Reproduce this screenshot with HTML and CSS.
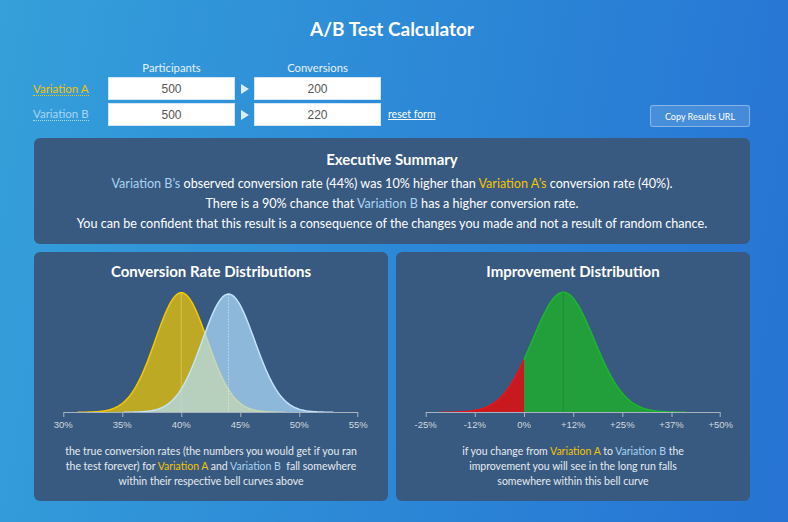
FILE: index.html
```html
<!DOCTYPE html>
<html lang="en">
<head>
<meta charset="utf-8">
<title>A/B Test Calculator</title>
<link rel="stylesheet" href="styles.css">
</head>
<body>
<div class="page">
  <h1 class="title">A/B Test Calculator</h1>

  <div class="form">
    <div class="head head-p">Participants</div>
    <div class="head head-c">Conversions</div>

    <span class="var var-a row-a">Variation A</span>
    <input class="field col-p row-a" value="500">
    <svg class="arrow row-a" viewBox="0 0 8 10"><polygon points="0,0 8,5 0,10"/></svg>
    <input class="field col-c row-a" value="200">

    <span class="var var-b row-b">Variation B</span>
    <input class="field col-p row-b" value="500">
    <svg class="arrow row-b" viewBox="0 0 8 10"><polygon points="0,0 8,5 0,10"/></svg>
    <input class="field col-c row-b" value="220">
    <a class="reset row-b" href="#">reset form</a>
    <button class="copy row-b" type="button">Copy Results URL</button>
  </div>

  <section class="panel summary">
    <h2 class="panel-title">Executive Summary</h2>
    <p class="summary-text">
      <span class="b">Variation B’s</span> observed conversion rate (44%) was 10% higher than <span class="a">Variation A’s</span> conversion rate (40%).<br>
      There is a 90% chance that <span class="b">Variation B</span> has a higher conversion rate.<br>
      You can be confident that this result is a consequence of the changes you made and not a result of random chance.
    </p>
  </section>

  <div class="charts">
    <section class="panel chart">
      <h2 class="panel-title">Conversion Rate Distributions</h2>
      <svg class="plot" width="354" height="151" viewBox="0 0 354 151">
        <path id="fillA" class="fill-a"/>
        <path id="lineA" class="line-a"/>
        <line id="meanA" class="mean-a"/>
        <path id="fillB" class="fill-b"/>
        <path id="lineB" class="line-b"/>
        <line id="meanB" class="mean-b"/>
        <g class="axis">
          <line x1="29.3" y1="131.5" x2="324.3" y2="131.5"/>
          <line x1="29.8" y1="131.5" x2="29.8" y2="136"/>
          <line x1="88.8" y1="131.5" x2="88.8" y2="136"/>
          <line x1="147.8" y1="131.5" x2="147.8" y2="136"/>
          <line x1="206.8" y1="131.5" x2="206.8" y2="136"/>
          <line x1="265.8" y1="131.5" x2="265.8" y2="136"/>
          <line x1="323.8" y1="131.5" x2="323.8" y2="136"/>
        </g>
        <g class="ticks">
          <text x="29.3" y="146.5">30%</text>
          <text x="88.3" y="146.5">35%</text>
          <text x="147.3" y="146.5">40%</text>
          <text x="206.3" y="146.5">45%</text>
          <text x="265.3" y="146.5">50%</text>
          <text x="324.3" y="146.5">55%</text>
        </g>
      </svg>
      <p class="caption">the true conversion rates (the numbers you would get if you ran<br>the test forever) for <span class="a">Variation A</span> and <span class="b">Variation B</span>&nbsp; fall somewhere<br>within their respective bell curves above</p>
    </section>

    <section class="panel chart">
      <h2 class="panel-title">Improvement Distribution</h2>
      <svg class="plot" width="354" height="151" viewBox="0 0 354 151">
        <path id="fillNeg" class="fill-neg"/>
        <path id="fillPos" class="fill-pos"/>
        <path id="lineNeg" class="line-neg"/>
        <path id="linePos" class="line-pos"/>
        <line id="meanI" class="mean-i"/>
        <g class="axis">
          <line x1="29.7" y1="131.5" x2="324.7" y2="131.5"/>
          <line x1="30.2" y1="131.5" x2="30.2" y2="136"/>
          <line x1="79.3" y1="131.5" x2="79.3" y2="136"/>
          <line x1="128.5" y1="131.5" x2="128.5" y2="136"/>
          <line x1="177.7" y1="131.5" x2="177.7" y2="136"/>
          <line x1="226.8" y1="131.5" x2="226.8" y2="136"/>
          <line x1="276" y1="131.5" x2="276" y2="136"/>
          <line x1="324.2" y1="131.5" x2="324.2" y2="136"/>
        </g>
        <g class="ticks">
          <text x="29.7" y="146.5">-25%</text>
          <text x="78.8" y="146.5">-12%</text>
          <text x="128" y="146.5">0%</text>
          <text x="177.2" y="146.5">+12%</text>
          <text x="226.3" y="146.5">+25%</text>
          <text x="275.5" y="146.5">+37%</text>
          <text x="324.7" y="146.5">+50%</text>
        </g>
      </svg>
      <p class="caption">if you change from <span class="a">Variation A</span> to <span class="b">Variation B</span> the<br>improvement you will see in the long run falls<br>somewhere within this bell curve</p>
    </section>
  </div>
</div>
<script src="script.js"></script>
</body>
</html>
```

FILE: styles.css
```css
* { box-sizing: border-box; }
html, body { margin: 0; height: 100%; }
body {
  background: linear-gradient(100deg, #35a0da 0%, #2d8bd7 45%, #2673d3 100%);
  font-family: Lato, "Open Sans", "Liberation Sans", sans-serif;
  color: #fff;
  min-height: 522px;
  overflow: hidden;
}
.page {
  width: 716px;
  margin-left: 34px;
  padding-top: 18px;
}
.title {
  margin: 0;
  font-size: 19px;
  line-height: 22px;
  font-weight: 700;
  text-align: center;
}
.form {
  margin: 19px 0 0 -1px;
  display: grid;
  grid-template-columns: 75px 127px 19px 127px 1fr auto;
  grid-template-rows: 16px 23px 23px;
  row-gap: 2px;
}
.form .row-a { grid-row: 2; }
.form .row-b { grid-row: 3; margin-top: 1px; }
.head {
  grid-row: 1;
  font-size: 11.25px;
  line-height: 16px;
  padding-top: 1px;
  text-align: center;
  color: #e6f1fb;
}
.head-p { grid-column: 2; }
.head-c { grid-column: 4; }
.var {
  grid-column: 1;
  align-self: center;
  justify-self: start;
  font-size: 11.5px;
  line-height: 13px;
  border-bottom: 1px dotted currentColor;
}
.var-a { color: #f4c400; }
.var-b { color: #a9d4f4; }
.field {
  width: 127px;
  height: 23px;
  border: 1px solid #d4e6f4;
  background: #fff;
  font-family: "Liberation Sans", Arial, sans-serif;
  font-size: 12px;
  color: #555;
  text-align: center;
  padding: 0;
  margin: 0;
  outline: none;
}
.col-p { grid-column: 2; }
.col-c { grid-column: 4; }
.arrow {
  grid-column: 3;
  width: 8px;
  height: 10px;
  align-self: center;
  margin-left: 6px;
  fill: #d9edfb;
}
.form .row-b.arrow { margin-top: 2px; }
.reset {
  grid-column: 5;
  align-self: center;
  justify-self: start;
  margin-left: 7px;
  font-size: 10.5px;
  color: #fff;
  text-decoration: underline;
}
.form .copy {
  grid-column: 6;
  align-self: start;
  width: 100px;
  height: 22px;
  margin: 3px 0 -3px 0;
  padding: 0;
  border: 1px solid rgba(255, 255, 255, 0.35);
  border-radius: 3px;
  background: rgba(255, 255, 255, 0.14);
  color: #fff;
  font-family: Lato, "Liberation Sans", sans-serif;
  font-size: 9px;
}
.panel {
  background: #385a80;
  border-radius: 6px;
}
.summary {
  margin-top: 13px;
  padding: 11px 10px 10px;
  text-align: center;
}
.panel-title {
  margin: 0;
  font-size: 15px;
  line-height: 20px;
  font-weight: 700;
}
.summary-text {
  margin: 5px 0 0;
  font-size: 12.6px;
  line-height: 20px;
}
.a { color: #f4c400; }
.b { color: #a9d4f4; }
.charts {
  margin-top: 8px;
  display: grid;
  grid-template-columns: 354px 354px;
  column-gap: 8px;
}
.chart {
  height: 249px;
  padding-top: 9px;
  text-align: center;
}
.plot { display: block; }
.caption {
  margin: 12px 0 0;
  font-size: 10.5px;
  line-height: 15px;
  color: #e6eaf0;
}
.fill-a { fill: rgba(243, 199, 0, 0.72); stroke: none; }
.line-a { fill: none; stroke: #f5c800; stroke-width: 1.5; }
.mean-a { stroke: rgba(255, 240, 160, 0.35); stroke-width: 1; }
.fill-b { fill: rgba(180, 224, 255, 0.7); stroke: none; }
.line-b { fill: none; stroke: #c2e4fd; stroke-width: 1.5; }
.mean-b { stroke: rgba(255, 255, 255, 0.35); stroke-width: 1; stroke-dasharray: 2 1; }
.fill-neg { fill: #c8191f; }
.fill-pos { fill: #229e3a; }
.line-neg { fill: none; stroke: #ee1118; stroke-width: 1.5; }
.line-pos { fill: none; stroke: #1cb82e; stroke-width: 1.5; }
.mean-i { stroke: #1d8f35; stroke-width: 1; }
.axis line { stroke: #a8b3bf; stroke-width: 1; }
.ticks text {
  font-family: "Liberation Sans", Arial, sans-serif;
  font-size: 9.5px;
  fill: #d2d8df;
  text-anchor: middle;
}
```

FILE: script.js
```js
(function () {
  var BASE = 131.3;
  function pts(mean, sd, peak, from, to) {
    var out = [], n = 160;
    for (var i = 0; i <= n; i++) {
      var x = from + (to - from) * i / n;
      var z = (x - mean) / sd;
      out.push([x, BASE - peak * Math.exp(-0.5 * z * z)]);
    }
    return out;
  }
  function line(p) {
    return p.map(function (q, i) {
      return (i ? 'L' : 'M') + q[0].toFixed(2) + ',' + q[1].toFixed(2);
    }).join('');
  }
  function area(p) {
    var first = p[0], last = p[p.length - 1];
    return 'M' + first[0].toFixed(2) + ',' + BASE + line(p).replace(/^M/, 'L') +
      'L' + last[0].toFixed(2) + ',' + BASE + 'Z';
  }
  function set(id, d) { document.getElementById(id).setAttribute('d', d); }
  function vline(id, x, y1) {
    var el = document.getElementById(id);
    el.setAttribute('x1', x); el.setAttribute('x2', x);
    el.setAttribute('y1', y1); el.setAttribute('y2', BASE);
  }

  var ma = 147.3, sa = 25.9, pa = 119.6;
  var mb = 194.5, sb = 26.2, pb = 119.6 * 25.9 / 26.2;
  var A = pts(ma, sa, pa, ma - 4 * sa, ma + 4 * sa);
  var B = pts(mb, sb, pb, mb - 4 * sb, mb + 4 * sb);
  set('fillA', area(A)); set('lineA', line(A));
  set('fillB', area(B)); set('lineB', line(B));
  vline('meanA', ma, BASE - pa);
  vline('meanB', mb, BASE - pb);

  var mi = 167.4, si = 30.7, pi = 120, zero = 128.0;
  var lo = mi - 4 * si, hi = mi + 4 * si;
  var N = pts(mi, si, pi, lo, zero);
  var P = pts(mi, si, pi, zero, hi);
  set('fillNeg', area(N)); set('lineNeg', line(N));
  set('fillPos', area(P)); set('linePos', line(P));
  vline('meanI', mi, BASE - pi);
})();
```
